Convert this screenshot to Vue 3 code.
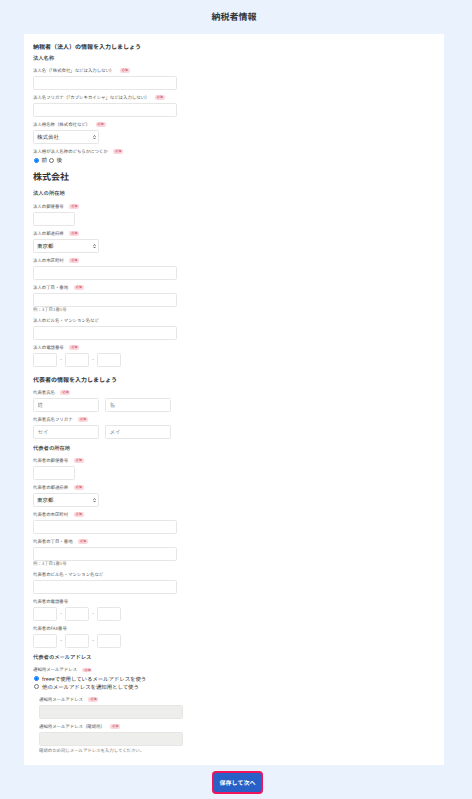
<script setup>
const fieldsA = [
  { label: '法人の郵便番号', req: true, kind: 'short' },
  { label: '法人の都道府県', req: true, kind: 'select', value: '東京都' },
  { label: '法人の市区町村', req: true, kind: 'wide' },
  { label: '法人の丁目・番地', req: true, kind: 'wide', hint: '例：3丁目1番1号' },
  { label: '法人のビル名・マンション名など', req: false, kind: 'wide' },
  { label: '法人の電話番号', req: true, kind: 'phone' }
]
const fieldsB = [
  { label: '代表者の郵便番号', req: true, kind: 'short' },
  { label: '代表者の都道府県', req: true, kind: 'select', value: '東京都' },
  { label: '代表者の市区町村', req: true, kind: 'wide' },
  { label: '代表者の丁目・番地', req: true, kind: 'wide', hint: '例：3丁目1番1号' },
  { label: '代表者のビル名・マンション名など', req: false, kind: 'wide' },
  { label: '代表者の電話番号', req: false, kind: 'phone' },
  { label: '代表者のFAX番号', req: false, kind: 'phone' }
]
</script>

<template>
  <div class="page">
    <h1 class="title">納税者情報</h1>
    <main class="card">
      <h2 class="heading">納税者（法人）の情報を入力しましょう</h2>
      <h3 class="sub first">法人名称</h3>

      <div class="field">
        <label class="label">法人名（「株式会社」などは入力しない）<span class="req">必須</span></label>
        <input class="input wide" />
      </div>
      <div class="field">
        <label class="label">法人名フリガナ（「カブシキカイシャ」などは入力しない）<span class="req">必須</span></label>
        <input class="input wide" />
      </div>
      <div class="field">
        <label class="label">法人格名称（株式会社など）<span class="req">必須</span></label>
        <div class="select-wrap">
          <select class="select"><option>株式会社</option></select>
          <svg class="arrows" viewBox="0 0 4 6"><path d="M.6 2.3 2 .7l1.4 1.6M.6 3.7 2 5.3l1.4-1.6" /></svg>
        </div>
      </div>
      <div class="field position">
        <label class="label">法人格が法人名称のどちらかにつくか<span class="req">必須</span></label>
        <div class="radio-row">
          <input class="radio" type="radio" name="pos" checked /><span class="radio-text">前</span>
          <input class="radio second" type="radio" name="pos" /><span class="radio-text">後</span>
        </div>
      </div>

      <p class="company">株式会社</p>
      <h3 class="sub location">法人の所在地</h3>

      <div v-for="f in fieldsA" :key="f.label" class="field" :class="{ hinted: f.hint }">
        <label class="label">{{ f.label }}<span v-if="f.req" class="req">必須</span></label>
        <input v-if="f.kind === 'short'" class="input short" />
        <input v-else-if="f.kind === 'wide'" class="input wide" />
        <div v-else-if="f.kind === 'select'" class="select-wrap">
          <select class="select"><option>{{ f.value }}</option></select>
          <svg class="arrows" viewBox="0 0 4 6"><path d="M.6 2.3 2 .7l1.4 1.6M.6 3.7 2 5.3l1.4-1.6" /></svg>
        </div>
        <div v-else class="phone">
          <input class="input tel" /><span class="dash">-</span>
          <input class="input tel" /><span class="dash">-</span>
          <input class="input tel" />
        </div>
        <p v-if="f.hint" class="hint">{{ f.hint }}</p>
      </div>

      <h2 class="heading second-heading">代表者の情報を入力しましょう</h2>
      <div class="field">
        <label class="label">代表者氏名<span class="req">必須</span></label>
        <div class="names"><input class="input name" placeholder="姓" /><input class="input name" placeholder="名" /></div>
      </div>
      <div class="field">
        <label class="label">代表者氏名フリガナ<span class="req">必須</span></label>
        <div class="names"><input class="input name" placeholder="セイ" /><input class="input name" placeholder="メイ" /></div>
      </div>

      <h3 class="sub after-names">代表者の所在地</h3>
      <div v-for="f in fieldsB" :key="f.label" class="field" :class="{ hinted: f.hint }">
        <label class="label">{{ f.label }}<span v-if="f.req" class="req">必須</span></label>
        <input v-if="f.kind === 'short'" class="input short" />
        <input v-else-if="f.kind === 'wide'" class="input wide" />
        <div v-else-if="f.kind === 'select'" class="select-wrap">
          <select class="select"><option>{{ f.value }}</option></select>
          <svg class="arrows" viewBox="0 0 4 6"><path d="M.6 2.3 2 .7l1.4 1.6M.6 3.7 2 5.3l1.4-1.6" /></svg>
        </div>
        <div v-else class="phone">
          <input class="input tel" /><span class="dash">-</span>
          <input class="input tel" /><span class="dash">-</span>
          <input class="input tel" />
        </div>
        <p v-if="f.hint" class="hint">{{ f.hint }}</p>
      </div>

      <h3 class="sub after-fax">代表者のメールアドレス</h3>
      <div class="mail-choice">
        <label class="label">通知用メールアドレス<span class="req">必須</span></label>
        <div class="mail-radio"><input class="radio" type="radio" name="mail" checked /><span class="mail-text">freeeで使用しているメールアドレスを使う</span></div>
        <div class="mail-radio"><input class="radio" type="radio" name="mail" /><span class="mail-text">他のメールアドレスを通知用として使う</span></div>
      </div>
      <div class="nested">
        <div class="field">
          <label class="label">通知用メールアドレス<span class="req">必須</span></label>
          <input class="input wide disabled" disabled />
        </div>
        <div class="field">
          <label class="label">通知用メールアドレス（確認用）<span class="req">必須</span></label>
          <input class="input wide disabled" disabled />
          <p class="hint nested-hint">確認のため同じメールアドレスを入力してください。</p>
        </div>
      </div>
    </main>
    <div class="footer"><button class="save" type="button">保存して次へ</button></div>
  </div>
</template>

<style>
html, body { margin: 0; background: #eaf2fe; }
</style>

<style scoped>
.page {
  box-sizing: border-box;
  width: 472px;
  height: 799px;
  padding-right: 4px;
  overflow: hidden;
  background: #eaf2fe;
  color: #323232;
  font-family: "Noto Sans CJK JP", "Noto Sans", sans-serif;
  text-rendering: geometricPrecision;
}
.title {
  margin: 0;
  height: 34px;
  font-size: 9px;
  line-height: 34px;
  font-weight: 700;
  text-align: center;
}
.card {
  box-sizing: border-box;
  height: 731px;
  margin: 0 24px;
  padding: 9px 9px 0;
  background: #fff;
}
.heading {
  margin: 0;
  height: 8px;
  font-size: 6px;
  line-height: 8px;
  font-weight: 700;
}
.second-heading { margin-top: 9px; margin-bottom: 5.5px; }
.sub {
  margin: 0 0 6px;
  height: 7px;
  font-size: 5.3px;
  line-height: 7px;
  font-weight: 500;
}
.sub.first { margin-top: 3.5px; margin-bottom: 6px; }
.sub.location { margin-bottom: 6.5px; }
.sub.after-names { margin-top: 5.5px; }
.sub.after-fax { margin-top: 6px; }
.field { margin-bottom: 4.5px; }
.field.hinted { margin-bottom: 5px; }
.position { margin-bottom: 7px; }
.label {
  display: flex;
  align-items: center;
  height: 8.5px;
  font-size: 4.4px;
  line-height: 6px;
  color: #555;
  padding-bottom: 2.5px;
  box-sizing: border-box;
}
.req {
  display: inline-block;
  width: 10px;
  height: 4.5px;
  margin-left: 5.5px;
  border-radius: 2px;
  background: #fbd6dc;
  color: #c0304a;
  font-size: 3px;
  line-height: 4.5px;
  text-align: center;
}
.input {
  display: block;
  box-sizing: border-box;
  height: 14px;
  padding: 0 3.5px;
  border: 1px solid #e6e6e6;
  border-radius: 1.5px;
  background: #fff;
  font-family: inherit;
  font-size: 5.5px;
  text-rendering: geometricPrecision;
  outline: none;
}
.input::placeholder { color: #8c8c8c; }
.wide { width: 144px; }
.short { width: 42px; }
.tel { width: 24px; }
.name { width: 66px; }
.disabled { background: #eeeeec; border-color: #e6e6e4; }
.select-wrap { position: relative; width: 66px; }
.select {
  display: block;
  box-sizing: border-box;
  width: 66px;
  height: 14px;
  padding: 0 3px;
  border: 1px solid #e6e6e6;
  border-radius: 1.5px;
  background: #fff;
  color: #333;
  font-family: inherit;
  font-size: 5.5px;
  text-rendering: geometricPrecision;
  appearance: none;
  outline: none;
}
.arrows {
  position: absolute;
  top: 4.8px;
  right: 3px;
  width: 3px;
  height: 4.5px;
  fill: none;
  stroke: #333;
  stroke-width: 1;
}
.radio-row { display: flex; align-items: center; height: 7px; }
.radio {
  flex: none;
  width: 5px;
  height: 5px;
  margin: 0 0 0 1px;
}
.radio-text { margin-left: 2.5px; font-size: 5.5px; line-height: 7px; }
.radio.second { margin-left: 2px; }
.company {
  margin: 0 0 7px;
  height: 12px;
  font-size: 9px;
  line-height: 12px;
  font-weight: 700;
}
.phone { display: flex; align-items: center; }
.dash { width: 8px; text-align: center; font-size: 4.5px; }
.names { display: flex; gap: 6px; }
.hint {
  margin: -0.5px 0 0;
  height: 6px;
  font-size: 4.4px;
  line-height: 6px;
  color: #777;
}
.mail-choice { margin-bottom: 6px; }
.mail-choice .label { height: 7.5px; padding-bottom: 1.5px; }
.mail-radio { display: flex; align-items: center; height: 8px; }
.mail-text { margin-left: 3px; font-size: 5.4px; line-height: 8px; }
.nested { padding-left: 6px; }
.nested-hint { margin-top: 1.5px; }
.footer { display: flex; justify-content: center; padding: 6px 0 0 7px; }
.save {
  box-sizing: border-box;
  width: 51px;
  height: 23px;
  padding: 0;
  border: 2px solid #f0145a;
  border-radius: 4px;
  background: #2860c8;
  color: #fff;
  font-family: inherit;
  font-size: 6px;
  font-weight: 700;
  text-rendering: geometricPrecision;
}
</style>
